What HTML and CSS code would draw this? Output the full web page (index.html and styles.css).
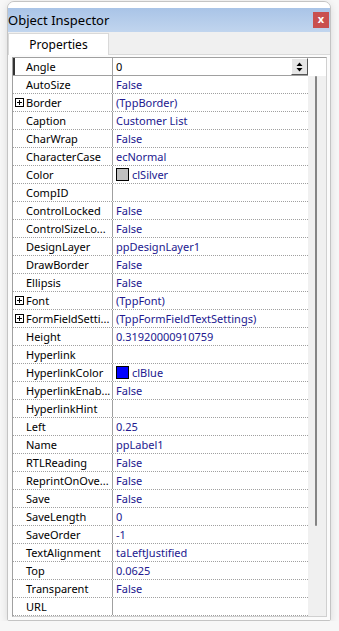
FILE: index.html
```html
<!DOCTYPE html>
<html lang="en">
<head>
    <meta charset="UTF-8">
    <meta name="viewport" content="width=device-width, initial-scale=1.0">
    <title>Object Inspector</title>
    <link rel="stylesheet" href="styles.css">
</head>
<body>
    <div class="window">
        <div class="frame-top"></div>
        <div class="titlebar">
            <span class="title">Object Inspector</span>
            <span class="close">x</span>
        </div>
        <div class="tabs">
            <div class="tab">Properties</div>
        </div>
        <div class="page">
            <div class="grid">
                <div class="rows">
                    <div class="row selected">
                        <div class="name">Angle</div>
                        <div class="value edit">
                            <span class="edit-text">0</span>
                            <span class="spin">
                                <svg width="7" height="10" viewBox="0 0 7 10"><path d="M3.5 0.5 L6.5 4 L0.5 4 Z M0.5 6 L6.5 6 L3.5 9.5 Z" fill="#000"/></svg>
                            </span>
                        </div>
                    </div>
                    <div class="row"><div class="name">AutoSize</div><div class="value">False</div></div>
                    <div class="row"><div class="name"><span class="plus"></span>Border</div><div class="value">(TppBorder)</div></div>
                    <div class="row"><div class="name">Caption</div><div class="value">Customer List</div></div>
                    <div class="row"><div class="name">CharWrap</div><div class="value">False</div></div>
                    <div class="row"><div class="name">CharacterCase</div><div class="value">ecNormal</div></div>
                    <div class="row"><div class="name">Color</div><div class="value"><span class="swatch silver"></span>clSilver</div></div>
                    <div class="row"><div class="name">CompID</div><div class="value"></div></div>
                    <div class="row"><div class="name">ControlLocked</div><div class="value">False</div></div>
                    <div class="row"><div class="name">ControlSizeLo...</div><div class="value">False</div></div>
                    <div class="row"><div class="name">DesignLayer</div><div class="value">ppDesignLayer1</div></div>
                    <div class="row"><div class="name">DrawBorder</div><div class="value">False</div></div>
                    <div class="row"><div class="name">Ellipsis</div><div class="value">False</div></div>
                    <div class="row"><div class="name"><span class="plus"></span>Font</div><div class="value">(TppFont)</div></div>
                    <div class="row"><div class="name"><span class="plus"></span>FormFieldSetti...</div><div class="value">(TppFormFieldTextSettings)</div></div>
                    <div class="row"><div class="name">Height</div><div class="value">0.31920000910759</div></div>
                    <div class="row"><div class="name">Hyperlink</div><div class="value"></div></div>
                    <div class="row"><div class="name">HyperlinkColor</div><div class="value"><span class="swatch blue"></span>clBlue</div></div>
                    <div class="row"><div class="name">HyperlinkEnab...</div><div class="value">False</div></div>
                    <div class="row"><div class="name">HyperlinkHint</div><div class="value"></div></div>
                    <div class="row"><div class="name">Left</div><div class="value">0.25</div></div>
                    <div class="row"><div class="name">Name</div><div class="value">ppLabel1</div></div>
                    <div class="row"><div class="name">RTLReading</div><div class="value">False</div></div>
                    <div class="row"><div class="name">ReprintOnOve...</div><div class="value">False</div></div>
                    <div class="row"><div class="name">Save</div><div class="value">False</div></div>
                    <div class="row"><div class="name">SaveLength</div><div class="value">0</div></div>
                    <div class="row"><div class="name">SaveOrder</div><div class="value">-1</div></div>
                    <div class="row"><div class="name">TextAlignment</div><div class="value">taLeftJustified</div></div>
                    <div class="row"><div class="name">Top</div><div class="value">0.0625</div></div>
                    <div class="row"><div class="name">Transparent</div><div class="value">False</div></div>
                    <div class="row"><div class="name">URL</div><div class="value"></div></div>
                </div>
                <div class="scrollbar">
                    <div class="scroll-top"></div>
                    <div class="track">
                        <div class="thumb"></div>
                    </div>
                </div>
            </div>
        </div>
    </div>
</body>
</html>
```

FILE: styles.css
```css
* {
    box-sizing: border-box;
}

body {
    font-family: 'Noto Sans', 'Open Sans', sans-serif;
    font-size: 11px;
    background-color: #f7f7f7;
    margin: 0;
    padding: 0;
}

.window {
    margin: 1px 0 0 7px;
    width: 324px;
    height: 620px;
    border: 1px solid #c4c4c4;
    border-radius: 7px 7px 2px 2px;
    background-color: #f0f0f0;
    box-shadow: 0 2px 8px rgba(0, 0, 0, 0.12);
    display: flex;
    flex-direction: column;
}

.frame-top {
    height: 6px;
    background-color: #ffffff;
    border-radius: 7px 7px 0 0;
}

.titlebar {
    height: 24px;
    background: linear-gradient(#a9c4e7, #c1d5ee);
    display: flex;
    align-items: center;
    justify-content: space-between;
    padding: 0 1px 0 0;
}

.title {
    font-size: 13px;
    color: #000;
    padding-left: 0;
}

.close {
    width: 16px;
    height: 16px;
    background-color: #c9504f;
    color: #fff;
    font-size: 11px;
    font-weight: 700;
    line-height: 14px;
    text-align: center;
}

.tabs {
    height: 23px;
    display: flex;
    align-items: flex-end;
    border-bottom: 1px solid #d9d9d9;
}

.tab {
    width: 101px;
    height: 22px;
    margin-bottom: -1px;
    background-color: #fff;
    border: 1px solid #d9d9d9;
    border-bottom: none;
    font-size: 12px;
    text-align: center;
    line-height: 21px;
    color: #000;
}

.page {
    flex: 1;
    padding: 2px 3px 3px 4px;
    background-color: #fbfbfb;
}

.grid {
    display: flex;
    border: 1px solid #a0a0a0;
    border-right-color: #d0d0d0;
    border-bottom-color: #d0d0d0;
    background-color: #fff;
}

.rows {
    width: 295px;
}

.row {
    display: flex;
    height: 18px;
    border-bottom: 1px dotted #a0a0a0;
}

.name {
    width: 100px;
    border-right: 1px solid #a0a0a0;
    padding-left: 13px;
    color: #000;
    line-height: 17px;
    white-space: nowrap;
    overflow: hidden;
    display: flex;
    align-items: center;
}

.value {
    flex: 1;
    padding-left: 3px;
    color: #22188f;
    line-height: 17px;
    white-space: nowrap;
    overflow: hidden;
    display: flex;
    align-items: center;
}

.selected {
    border-bottom: 1px solid #a0a0a0;
}

.selected .name {
    box-shadow: inset 2px 0 0 #333;
}

.edit {
    justify-content: space-between;
    color: #000;
}

.spin {
    width: 17px;
    height: 17px;
    background-color: #e6e6e6;
    border: 1px solid #fff;
    border-right-color: #555;
    border-bottom-color: #555;
    display: flex;
    align-items: center;
    justify-content: center;
}

.plus {
    width: 9px;
    height: 9px;
    margin-left: -11px;
    margin-right: 2px;
    border: 1px solid #000;
    position: relative;
    flex-shrink: 0;
}

.plus::before,
.plus::after {
    content: "";
    position: absolute;
    background-color: #000;
}

.plus::before {
    left: 1px;
    top: 3px;
    width: 5px;
    height: 1px;
}

.plus::after {
    left: 3px;
    top: 1px;
    width: 1px;
    height: 5px;
}

.swatch {
    width: 13px;
    height: 13px;
    border: 1px solid #000;
    margin-right: 3px;
    flex-shrink: 0;
}

.silver {
    background-color: #c0c0c0;
}

.blue {
    background-color: #0000ff;
}

.scrollbar {
    width: 18px;
    display: flex;
    flex-direction: column;
}

.scroll-top {
    height: 18px;
    background-color: #fff;
}

.track {
    flex: 1;
    background-color: #f0f0f0;
    padding-left: 7px;
}

.thumb {
    width: 2px;
    height: 450px;
    background-color: #858585;
    border-radius: 1px;
}
```
